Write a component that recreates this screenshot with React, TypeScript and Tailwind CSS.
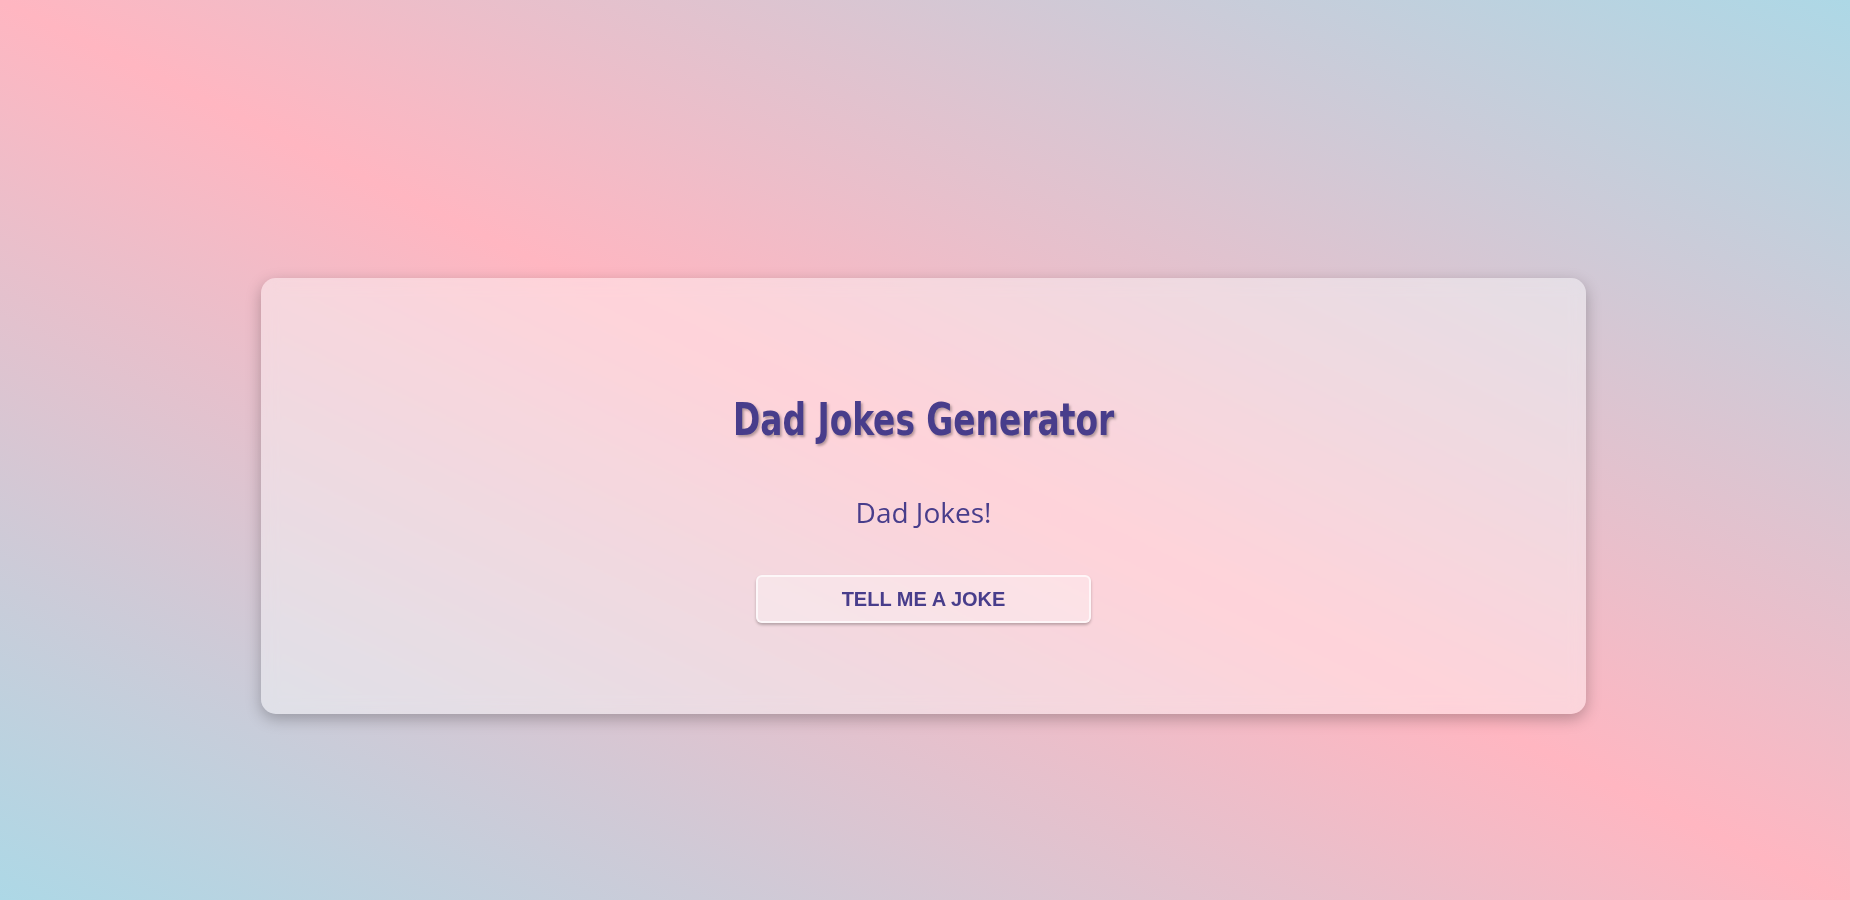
export default function App() {
  return (
    <div className="min-h-screen w-full bg-[linear-gradient(to_top_right,#add8e6,#ffb6c1,#add8e6)] pt-[278px]">
      {/* card */}
      <div className="ml-[261px] flex w-[1325px] flex-col items-center rounded-[15px] bg-white/40 pt-[118px] pb-[91px] shadow-[0_5px_15px_rgba(0,0,0,0.25)] backdrop-blur-sm">
        <h1 className="scale-x-[0.83] font-['DejaVu_Sans_Condensed','DejaVu_Sans',sans-serif] text-[44px] leading-[48px] font-bold text-[#483d8b] [text-shadow:2px_2px_3px_rgba(0,0,0,0.3)]">
          Dad Jokes Generator
        </h1>
        <p className="mt-[48px] font-['Open_Sans',sans-serif] text-[28px] leading-[40px] text-[#483d8b]">
          Dad Jokes!
        </p>
        <button className="mt-[43px] h-[48px] w-[335px] rounded-[6px] border-2 border-white/70 bg-white/30 font-['Liberation_Sans',Arial,sans-serif] text-[20px] font-bold text-[#483d8b] uppercase shadow-[0_2px_3px_rgba(0,0,0,0.25)]">
          Tell me a joke
        </button>
      </div>
    </div>
  );
}
